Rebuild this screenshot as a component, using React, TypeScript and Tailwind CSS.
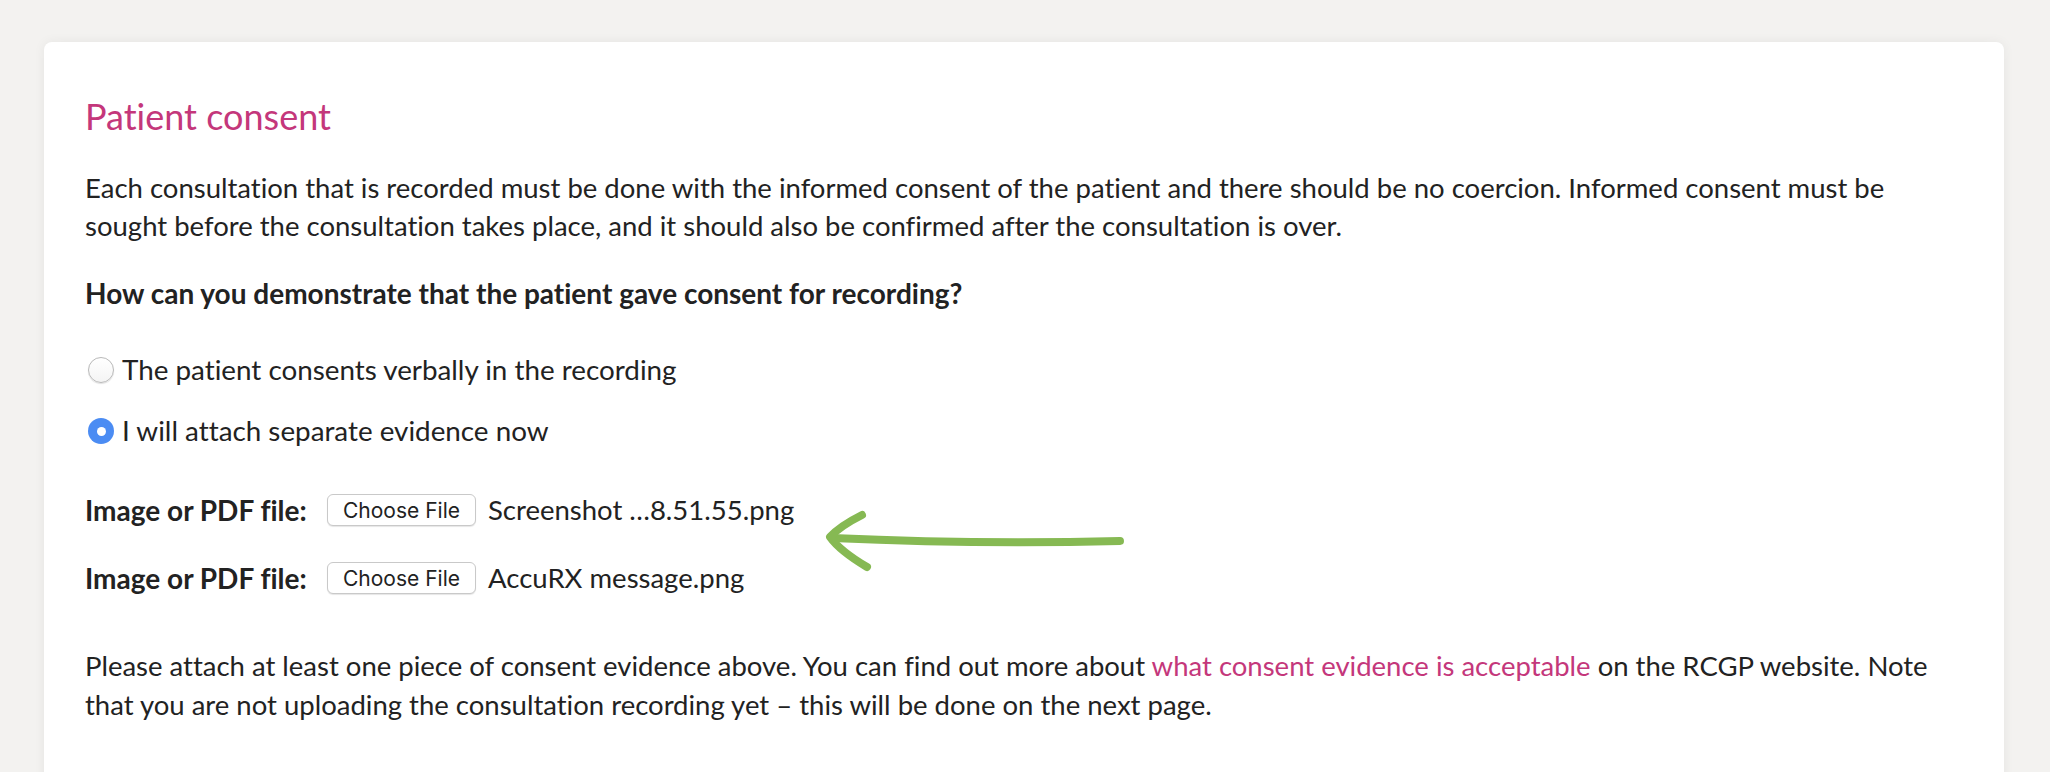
import { useState } from "react";

const pink = "text-[#c4377b]";

function Radio({ checked, label, onClick }: { checked: boolean; label: string; onClick: () => void }) {
  return (
    <label className="flex items-center h-[38px] cursor-pointer" onClick={onClick}>
      <span
        className={
          checked
            ? "ml-[3px] mr-[8px] flex h-[26px] w-[26px] items-center justify-center rounded-full bg-[#4b8cf3]"
            : "ml-[3px] mr-[8px] h-[26px] w-[26px] rounded-full border border-[#b9b9b9] bg-gradient-to-b from-white to-[#f4f4f4] shadow-[0_1px_1px_rgba(0,0,0,0.12)]"
        }
      >
        {checked && <span className="h-[9px] w-[9px] rounded-full bg-white" />}
      </span>
      <span className="text-[27.8px]">{label}</span>
    </label>
  );
}

function FileRow({ name, className }: { name: string; className?: string }) {
  return (
    <div className={"flex items-center h-[38px] " + (className ?? "")}>
      <span className="font-bold text-[28px] w-[242px]">Image or PDF file:</span>
      <button className="flex h-[32px] w-[149px] items-center justify-center rounded-[6px] border border-[#c9c9c9] bg-white pt-[2px] text-[21px] text-[#222] shadow-[0_1px_1px_rgba(0,0,0,0.1)] font-['Inter',sans-serif]">
        Choose File
      </button>
      <span className="ml-[12px]">{name}</span>
    </div>
  );
}

export default function App() {
  const [choice, setChoice] = useState(1);

  return (
    <div className="min-h-screen bg-[#f3f2f0] pt-[42px] font-['Lato',sans-serif] text-[#222] [font-variant-ligatures:none]">
      {/* Card */}
      <div className="relative ml-[44px] mr-[46px] min-h-[760px] rounded-[8px] bg-white px-[41px] pt-[54px] shadow-[0_0_12px_rgba(0,0,0,0.06)]">
        <h2 className={"text-[36px] leading-[40px] " + pink}>Patient consent</h2>

        <p className="mt-[33px] text-[27.5px] leading-[38px]">
          Each consultation that is recorded must be done with the informed consent of the patient and there should be no
          coercion. Informed consent must be sought before the consultation takes place, and it should also be confirmed
          after the consultation is over.
        </p>

        <p className="mt-[29px] text-[28px] leading-[38px] font-bold">
          How can you demonstrate that the patient gave consent for recording?
        </p>

        <div className="text-[27.5px] leading-[38px]">
          <div className="mt-[39px]">
            <Radio checked={choice === 0} label="The patient consents verbally in the recording" onClick={() => setChoice(0)} />
          </div>
          <div className="mt-[23px]">
            <Radio checked={choice === 1} label="I will attach separate evidence now" onClick={() => setChoice(1)} />
          </div>

          <FileRow className="mt-[41px]" name="Screenshot …8.51.55.png" />
          <FileRow className="mt-[30px]" name="AccuRX message.png" />

          <p className="mt-[49px] leading-[39px]">
            Please attach at least one piece of consent evidence above. You can find out more about{" "}
            <a href="#" className={pink}>
              what consent evidence is acceptable
            </a>{" "}
            on the RCGP website. Note that you are not uploading the consultation recording yet – this will be done on the
            next page.
          </p>
        </div>

        {/* hand-drawn arrow annotation */}
        <svg
          className="absolute left-[778px] top-[463px]"
          width="310"
          height="70"
          viewBox="0 0 310 70"
          fill="none"
          stroke="#86b953"
          strokeWidth="8"
          strokeLinecap="round"
          strokeLinejoin="round"
        >
          <path d="M298 36 C 220 38, 120 38, 10 33" />
          <path d="M40 10 Q 18 21, 8 32 Q 18 46, 45 62" />
        </svg>
      </div>
    </div>
  );
}
